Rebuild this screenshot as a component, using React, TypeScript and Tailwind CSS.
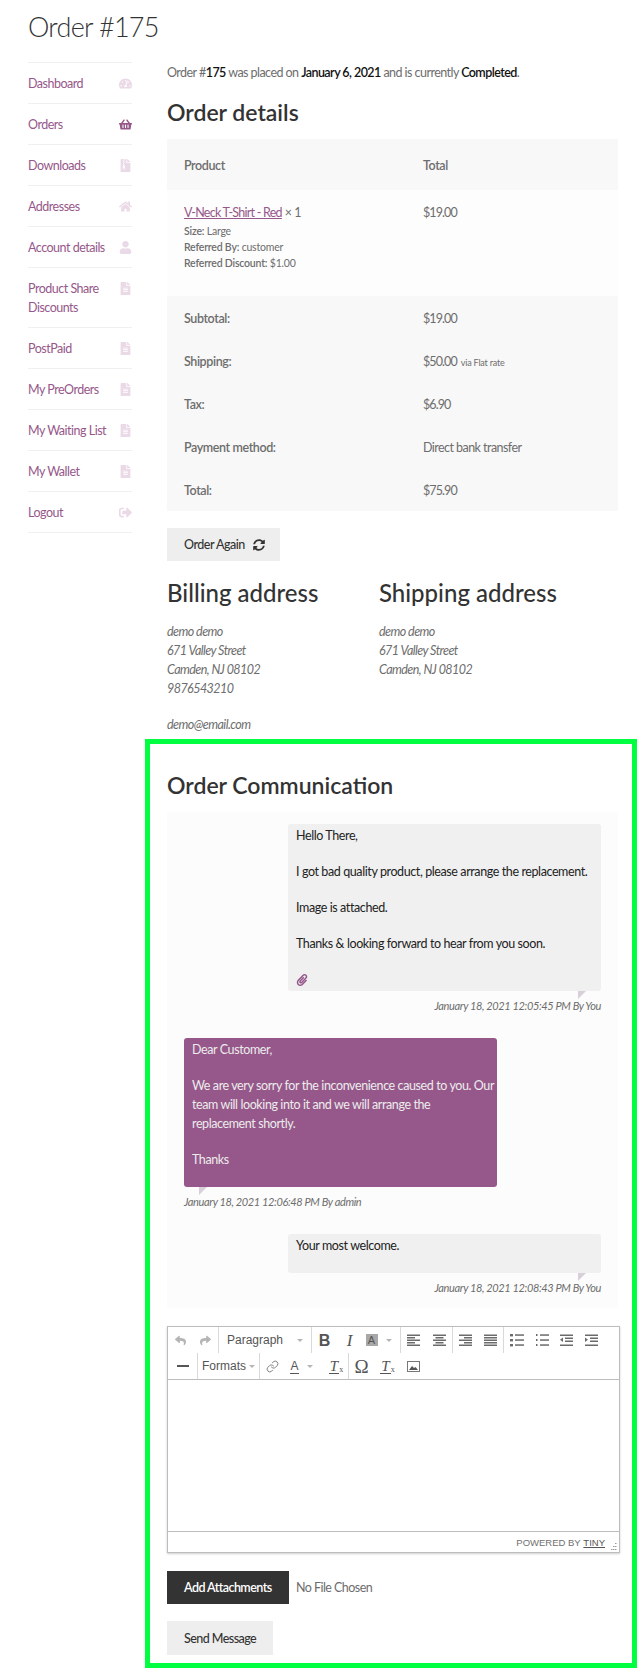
import React from 'react';
import { FaTachometerAlt, FaShoppingBasket, FaFileArchive, FaHome, FaUser, FaFileAlt, FaSignOutAlt, FaSyncAlt, FaPaperclip, FaReply, FaShare } from 'react-icons/fa';
import { Link } from 'lucide-react';

const menu = [
  { label: 'Dashboard', icon: <FaTachometerAlt /> },
  { label: 'Orders', icon: <FaShoppingBasket />, active: true },
  { label: 'Downloads', icon: <FaFileArchive /> },
  { label: 'Addresses', icon: <FaHome /> },
  { label: 'Account details', icon: <FaUser /> },
  { label: 'Product Share Discounts', icon: <FaFileAlt /> },
  { label: 'PostPaid', icon: <FaFileAlt /> },
  { label: 'My PreOrders', icon: <FaFileAlt /> },
  { label: 'My Waiting List', icon: <FaFileAlt /> },
  { label: 'My Wallet', icon: <FaFileAlt /> },
  { label: 'Logout', icon: <FaSignOutAlt /> },
];

const totals = [
  { label: 'Subtotal:', value: '$19.00', money: true },
  { label: 'Shipping:', value: '$50.00', money: true, note: 'via Flat rate' },
  { label: 'Tax:', value: '$6.90', money: true },
  { label: 'Payment method:', value: 'Direct bank transfer' },
  { label: 'Total:', value: '$75.90', money: true },
];

const AlignIcon = ({ rows }: { rows: number[][] }) => (
  <svg width="13" height="13" viewBox="0 0 13 13" fill="#6b6b6b">
    {rows.map((r, i) => <rect key={i} x={r[0]} y={i * 2.5 + 0.5} width={r[1]} height="1.5" />)}
  </svg>
);

const ListIcon = ({ numbered }: { numbered?: boolean }) => (
  <svg width="14" height="13" viewBox="0 0 14 13" fill="#6b6b6b">
    {[1, 6, 11].map((y) => (
      <g key={y}>
        <rect x={numbered ? 1 : 0} y={y - 1} width={numbered ? 1.5 : 3} height={numbered ? 2 : 2.4} />
        <rect x="5" y={y - 0.7} width="9" height="1.5" />
      </g>
    ))}
  </svg>
);

const IndentIcon = ({ flip }: { flip?: boolean }) => (
  <svg width="13" height="13" viewBox="0 0 13 13" fill="#6b6b6b">
    <rect x="0" y="0.5" width="13" height="1.5" />
    <rect x="5" y="3.5" width="8" height="1.5" />
    <rect x="5" y="6.5" width="8" height="1.5" />
    <rect x="0" y="10.5" width="13" height="1.5" />
    <path d={flip ? 'M0 3.5l3 2.3-3 2.3z' : 'M3 3.5L0 5.8l3 2.3z'} />
  </svg>
);

const Caret = () => <span className="w-0 h-0 border-x-[3px] border-x-transparent border-t-[3px] border-t-[#b5b5b5]" />;

const ClearFormat = () => (
  <span className="relative font-['Liberation_Serif',serif] italic text-[15px] leading-[14px] text-[#555] border-b border-[#555] px-[1px] mr-[3px]">
    T<span className="absolute -right-[4px] bottom-[-1px] not-italic text-[8px] leading-none">x</span>
  </span>
);

const Btn = ({ w, sep, children }: { w: string; sep?: boolean; children: React.ReactNode }) => (
  <div className={`${w} h-full flex items-center justify-center shrink-0 ${sep ? 'border-l border-[#d9d9d9]' : ''}`}>{children}</div>
);

const Bubble = ({ paragraphs, admin, clip, date }: { paragraphs: string[][]; admin?: boolean; clip?: boolean; date: string }) => (
  <div className={`bg-[#fcfcfc] px-[17px] pt-3 pb-[11px] flex flex-col ${admin ? 'items-start' : 'items-end'}`}>
    <div className={`relative w-[313px] rounded-[3px] px-2 pt-[2px] pb-[1px] ${admin ? 'bg-[#96588a] text-[#ececec]' : 'bg-[#f0f0f0] text-[#222]'}`}>
      {paragraphs.map((lines, i) => (
        <p key={i} className="mb-[17px] whitespace-pre">{lines.join('\n')}</p>
      ))}
      {clip && <div className="h-5 text-[#96588a] text-[12px] flex items-center"><FaPaperclip /></div>}
      <span className={`absolute top-full w-2 h-2 bg-[#d9cfdb] [clip-path:polygon(0_0,100%_0,0_100%)] ${admin ? 'left-[15px]' : 'right-[15px]'}`} />
    </div>
    <div className="mt-[5px] text-[11px] tracking-[-0.37px] italic text-[#6d6d6d]">{date}</div>
  </div>
);

export default function App() {
  return (
    <div className="w-[642px] pl-7 pb-1 font-['Lato',sans-serif] text-[12.5px] tracking-[-0.4px] leading-[19px] text-[#6d6d6d] bg-white">
      <h1 className="h-[62px] pt-[4px] text-[27px] tracking-[-0.7px] leading-[46px] font-light text-[#333]">Order #175</h1>
      <div className="flex gap-[35px]">
        <nav className="w-[104px] shrink-0 border-b border-[#f0f0f0] self-start">
          {menu.map((item) => (
            <div key={item.label} className="flex justify-between border-t border-[#f0f0f0] pt-[11px] pb-[10px] text-[#96588a] tracking-[-0.5px]">
              <span className="w-[84px]">{item.label}</span>
              <span className={`text-[13px] mt-[3px] ${item.active ? 'text-[#96588a]' : 'text-[#ead9e6]'}`}>{item.icon}</span>
            </div>
          ))}
        </nav>

        <main className="w-[451px] shrink-0">
          <p className="pt-[1px] tracking-[-0.55px]">
            Order #<b className="font-semibold text-[#111]">175</b> was placed on <b className="font-semibold text-[#111]">January 6, 2021</b> and is currently <b className="font-semibold text-[#111]">Completed</b>.
          </p>
          <h2 className="mt-[15px] text-[23px] tracking-[0px] leading-[30px] font-semibold text-[#333]">Order details</h2>
          <div className="mt-[12px]">
            <div className="flex items-center h-[51px] pt-[2px] bg-[#f8f8f8] font-semibold">
              <span className="w-[239px] pl-[17px]">Product</span>
              <span className="pl-[17px]">Total</span>
            </div>
            <div className="flex h-[106px] bg-[#fdfdfd] pt-[13px]">
              <div className="w-[239px] pl-[17px]">
                <div><a className="text-[#96588a] underline tracking-[-0.75px]">V-Neck T-Shirt - Red</a> × 1</div>
                <div className="mt-[1px] text-[10.5px] tracking-[-0.2px] leading-4"><b className="font-semibold">Size:</b> Large</div>
                <div className="text-[10.5px] tracking-[-0.2px] leading-4"><b className="font-semibold">Referred By:</b> customer</div>
                <div className="text-[10.5px] tracking-[-0.2px] leading-4"><b className="font-semibold">Referred Discount:</b> $1.00</div>
              </div>
              <div className="pl-[17px] tracking-[-0.9px]">$19.00</div>
            </div>
            <div className="bg-[#f8f8f8]">
              {totals.map((row) => (
                <div key={row.label} className="flex items-center h-[43px] pt-[2px]">
                  <span className="w-[239px] pl-[17px] font-semibold">{row.label}</span>
                  <span className={`pl-[17px] ${row.money ? 'tracking-[-0.9px]' : 'tracking-[-0.55px]'}`}>{row.value}{row.note && <small className="ml-1 text-[9px] tracking-[-0.2px]">{row.note}</small>}</span>
                </div>
              ))}
            </div>
          </div>
          <button className="mt-[17px] w-[113px] h-[33px] pl-[17px] bg-[#eeeeee] text-[#333] font-medium flex items-center gap-2 tracking-[-0.5px]">
            Order Again <FaSyncAlt className="text-[12px]" />
          </button>

          <div className="flex mt-[14px]">
            <div className="w-[212px]">
              <h3 className="text-[24px] tracking-[0px] leading-[36px] text-[#333] font-medium">Billing address</h3>
              <address className="mt-[11px] text-[12.5px] tracking-[-0.55px]">demo demo<br />671 Valley Street<br />Camden, NJ 08102<br />9876543210<div className="mt-[17px]">demo@email.com</div></address>
            </div>
            <div>
              <h3 className="text-[24px] tracking-[0px] leading-[36px] text-[#333] font-medium">Shipping address</h3>
              <address className="mt-[11px] text-[12.5px] tracking-[-0.55px]">demo demo<br />671 Valley Street<br />Camden, NJ 08102</address>
            </div>
          </div>

          <section className="mt-[5px] -ml-[22px] w-[492px] border-[5px] border-[#00ff41] pl-[17px] pb-[8px]">
            <h2 className="pt-[25px] text-[23px] tracking-[0px] leading-[32px] font-semibold text-[#333]">Order Communication</h2>
            <div className="mt-[11px] w-[451px]">
              <Bubble clip date="January 18, 2021 12:05:45 PM By You" paragraphs={[['Hello There,'], ['I got bad quality product, please arrange the replacement.'], ['Image is attached.'], ['Thanks & looking forward to hear from you soon.']]} />
              <Bubble admin date="January 18, 2021 12:06:48 PM By admin" paragraphs={[['Dear Customer,'], ['We are very sorry for the inconvenience caused to you. Our', 'team will looking into it and we will arrange the', 'replacement shortly.'], ['Thanks']]} />
              <Bubble date="January 18, 2021 12:08:43 PM By You" paragraphs={[['Your most welcome.']]} />
            </div>

            <div className="mt-[18px] w-[453px] h-[227px] border border-[#bdbdbd] shadow-[0_1px_2px_rgba(0,0,0,0.2)] font-['Liberation_Sans',sans-serif] tracking-normal flex flex-col">
              <div className="h-[26px] flex items-center text-[#555]">
                <Btn w="w-[25px]"><FaReply className="text-[11px] text-[#b5b5b5]" /></Btn>
                <Btn w="w-[25px]"><FaShare className="text-[11px] text-[#b5b5b5]" /></Btn>
                <Btn w="w-[93px]" sep><span className="text-[12px] w-full pl-2 pr-[8px] flex items-center justify-between">Paragraph<Caret /></span></Btn>
                <Btn w="w-[26px]" sep><span className="font-bold text-[16px]">B</span></Btn>
                <Btn w="w-[25px]"><span className="italic text-[17px] font-['Liberation_Serif',serif]">I</span></Btn>
                <Btn w="w-[38px]"><span className="mr-[8px] ml-[-5px] w-3 h-3 bg-[#a8a8a8] text-[11px] leading-3 text-center">A</span><Caret /></Btn>
                <Btn w="w-[26px]" sep><AlignIcon rows={[[0, 13], [0, 8], [0, 13], [0, 8], [0, 13]]} /></Btn>
                <Btn w="w-[26px]"><AlignIcon rows={[[0, 13], [2.5, 8], [0, 13], [2.5, 8], [0, 13]]} /></Btn>
                <Btn w="w-[26px]" sep><AlignIcon rows={[[0, 13], [5, 8], [0, 13], [5, 8], [0, 13]]} /></Btn>
                <Btn w="w-[25px]"><AlignIcon rows={[[0, 13], [0, 13], [0, 13], [0, 13], [0, 13]]} /></Btn>
                <Btn w="w-[26px]" sep><ListIcon /></Btn>
                <Btn w="w-[25px]"><ListIcon numbered /></Btn>
                <Btn w="w-[25px]"><IndentIcon /></Btn>
                <Btn w="w-[25px]"><IndentIcon flip /></Btn>
              </div>
              <div className="h-[27px] flex items-center text-[#555] border-b border-[#bdbdbd]">
                <Btn w="w-[29px]"><span className="w-3 h-[2px] bg-[#555]" /></Btn>
                <Btn w="w-[62px]" sep><span className="text-[12px] flex items-center gap-[3px]">Formats<Caret /></span></Btn>
                <Btn w="w-[26px]" sep><Link size={13} strokeWidth={1.5} className="text-[#666]" /></Btn>
                <Btn w="w-[38px]"><span className="mr-[8px] ml-[-5px] text-[12px] leading-[14px] border-b border-[#555]">A</span><Caret /></Btn>
                <Btn w="w-[25px]"><ClearFormat /></Btn>
                <Btn w="w-[26px]" sep><span className="text-[19px] font-['Liberation_Serif',serif]">Ω</span></Btn>
                <Btn w="w-[26px]"><ClearFormat /></Btn>
                <Btn w="w-[26px]">
                  <svg width="13" height="11" viewBox="0 0 13 11"><rect x="0.5" y="0.5" width="12" height="10" fill="#fff" stroke="#777" /><path d="M2 9l3-4 2 2 1.5-1L11 9z" fill="#555" /></svg>
                </Btn>
              </div>
              <div className="flex-1 bg-white" />
              <div className="h-[21px] border-t border-[#bdbdbd] flex items-center justify-end pr-[14px] text-[9.5px] text-[#707070] relative">
                POWERED BY&nbsp;<span className="underline text-[#555]">TINY</span>
                <svg className="absolute right-[2px] bottom-[2px]" width="7" height="7" viewBox="0 0 7 7" fill="#999"><rect x="5" y="0" width="1.5" height="1" /><rect x="3" y="3" width="1.5" height="1" /><rect x="5" y="3" width="1.5" height="1" /><rect x="1" y="6" width="1.5" height="1" /><rect x="3" y="6" width="1.5" height="1" /><rect x="5" y="6" width="1.5" height="1" /></svg>
              </div>
            </div>

            <div className="mt-[18px] flex items-center gap-[7px] tracking-[-0.55px]">
              <button className="w-[122px] h-[33px] pl-[17px] text-left bg-[#333] text-white font-semibold">Add Attachments</button>
              <span>No File Chosen</span>
            </div>
            <button className="mt-[17px] block w-[106px] h-[34px] pl-[17px] text-left bg-[#eeeeee] text-[#333] font-medium tracking-[-0.55px]">Send Message</button>
          </section>
        </main>
      </div>
    </div>
  );
}
